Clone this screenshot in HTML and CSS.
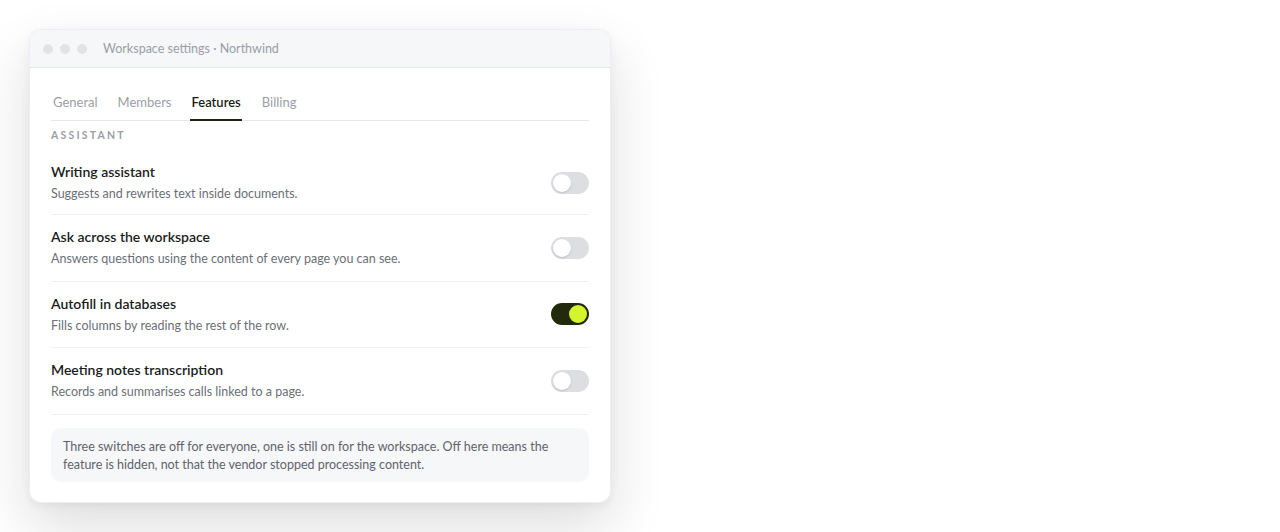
FILE: index.html
```html
<!DOCTYPE html>
<html>
<head>
<meta charset="utf-8">
<link rel="stylesheet" href="styles.css">
</head>
<body>
<div class="window">
  <div class="titlebar">
    <span class="dot"></span><span class="dot"></span><span class="dot"></span>
    <span class="title">Workspace settings · Northwind</span>
  </div>
  <div class="content">
    <nav class="tabs">
      <span class="tab">General</span>
      <span class="tab">Members</span>
      <span class="tab active">Features</span>
      <span class="tab">Billing</span>
    </nav>
    <div class="section-label">ASSISTANT</div>
    <div class="row first">
      <div class="text">
        <div class="name">Writing assistant</div>
        <div class="desc">Suggests and rewrites text inside documents.</div>
      </div>
      <span class="toggle"></span>
    </div>
    <div class="row">
      <div class="text">
        <div class="name">Ask across the workspace</div>
        <div class="desc">Answers questions using the content of every page you can see.</div>
      </div>
      <span class="toggle"></span>
    </div>
    <div class="row">
      <div class="text">
        <div class="name">Autofill in databases</div>
        <div class="desc">Fills columns by reading the rest of the row.</div>
      </div>
      <span class="toggle on"></span>
    </div>
    <div class="row">
      <div class="text">
        <div class="name">Meeting notes transcription</div>
        <div class="desc">Records and summarises calls linked to a page.</div>
      </div>
      <span class="toggle"></span>
    </div>
    <div class="note">Three switches are off for everyone, one is still on for the workspace. Off here means the feature is hidden, not that the vendor stopped processing content.</div>
  </div>
</div>
</body>
</html>
```

FILE: styles.css
```css
* { box-sizing: border-box; }
html, body { margin: 0; padding: 0; background: #fff; }
body {
  font-family: "Lato", "Open Sans", sans-serif;
  padding: 29px 0 0 29px;
  min-height: 532px;
}
.window {
  width: 582px;
  height: 474px;
  background: #fff;
  border: 1px solid #eceef1;
  border-radius: 12px;
  box-shadow: 0 24px 56px rgba(20, 24, 30, 0.14), 0 3px 10px rgba(20, 24, 30, 0.05);
  overflow: hidden;
}
.titlebar {
  height: 38px;
  background: #f6f7f9;
  border-bottom: 1px solid #e4e6ea;
  display: flex;
  align-items: center;
  padding-left: 13px;
  gap: 7px;
}
.dot {
  width: 10px;
  height: 10px;
  border-radius: 50%;
  background: #e1e3e7;
}
.title {
  margin-left: 9px;
  font-size: 12.5px;
  color: #9a9ea6;
}
.content {
  padding: 0 21px;
}
.tabs {
  display: flex;
  gap: 20px;
  padding-left: 2px;
  margin-top: 26px;
  border-bottom: 1px solid #e6e8eb;
}
.tab {
  font-size: 13px;
  color: #9a9ea6;
  padding-bottom: 9px;
  border-bottom: 2px solid transparent;
  margin-bottom: -1px;
}
.tab.active {
  color: #1b1d12;
  font-weight: 600;
  border-bottom-color: #1f2410;
  margin-left: -1px;
  padding: 0 1px 9px;
}
.section-label {
  margin-top: 8px;
  font-size: 10.5px;
  font-weight: 700;
  letter-spacing: 2.2px;
  color: #9a9ea6;
}
.row {
  display: flex;
  align-items: center;
  justify-content: space-between;
  height: 66.5px;
  border-bottom: 1px solid #f0f1f3;
}
.row.first { height: 74px; padding-top: 10px; }
.name {
  font-size: 14px;
  font-weight: 600;
  color: #1a1c20;
  line-height: 18px;
}
.desc {
  margin-top: 5px;
  font-size: 12.5px;
  color: #6b6f76;
  line-height: 16px;
}
.toggle {
  position: relative;
  width: 38px;
  height: 22px;
  border-radius: 11px;
  background: #dcdee2;
  flex-shrink: 0;
}
.toggle::after {
  content: "";
  position: absolute;
  top: 2px;
  left: 2px;
  width: 18px;
  height: 18px;
  border-radius: 50%;
  background: #fff;
  box-shadow: 0 1px 2px rgba(0,0,0,0.15);
}
.toggle.on { background: #232a0b; }
.toggle.on::after {
  left: 18px;
  background: #d4f52e;
}
.note {
  margin-top: 13px;
  background: #f6f7f9;
  border-radius: 10px;
  padding: 10px 12px 8px;
  font-size: 12.5px;
  line-height: 18px;
  color: #5f636b;
}
```
